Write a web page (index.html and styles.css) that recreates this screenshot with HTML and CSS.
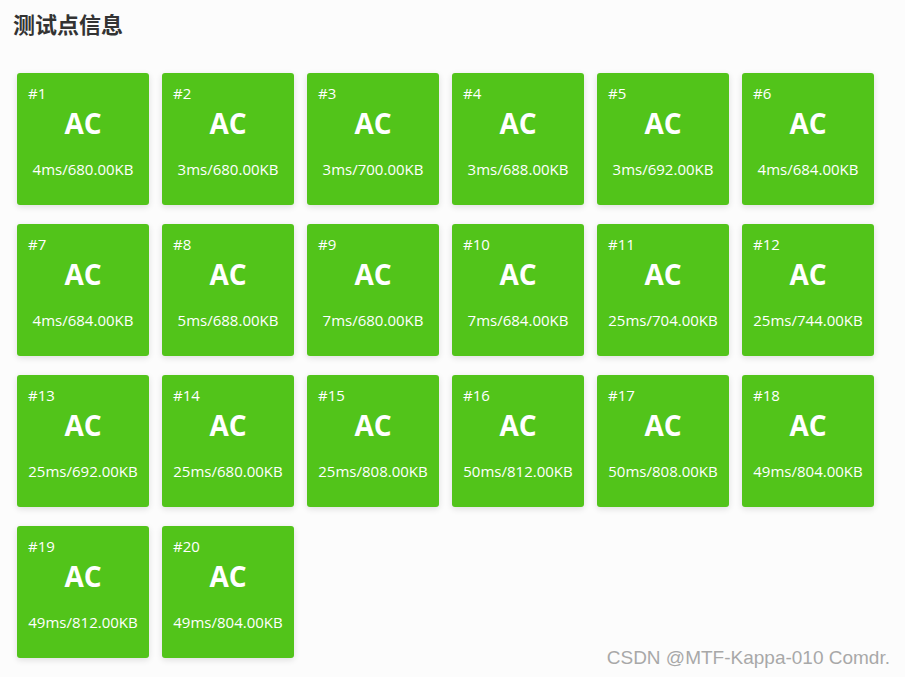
FILE: index.html
```html
<!DOCTYPE html>
<html lang="zh-CN">
<head>
    <meta charset="UTF-8">
    <meta name="viewport" content="width=device-width, initial-scale=1.0">
    <title>测试点信息</title>
    <link rel="stylesheet" href="styles.css">
</head>
<body>
    <div class="panel">
        <h3 class="panel-title">测试点信息</h3>
        <div class="cases">
            <div class="case"><span class="case-id">#1</span><span class="case-status">AC</span><span class="case-info">4ms/680.00KB</span></div>
            <div class="case"><span class="case-id">#2</span><span class="case-status">AC</span><span class="case-info">3ms/680.00KB</span></div>
            <div class="case"><span class="case-id">#3</span><span class="case-status">AC</span><span class="case-info">3ms/700.00KB</span></div>
            <div class="case"><span class="case-id">#4</span><span class="case-status">AC</span><span class="case-info">3ms/688.00KB</span></div>
            <div class="case"><span class="case-id">#5</span><span class="case-status">AC</span><span class="case-info">3ms/692.00KB</span></div>
            <div class="case"><span class="case-id">#6</span><span class="case-status">AC</span><span class="case-info">4ms/684.00KB</span></div>
            <div class="case"><span class="case-id">#7</span><span class="case-status">AC</span><span class="case-info">4ms/684.00KB</span></div>
            <div class="case"><span class="case-id">#8</span><span class="case-status">AC</span><span class="case-info">5ms/688.00KB</span></div>
            <div class="case"><span class="case-id">#9</span><span class="case-status">AC</span><span class="case-info">7ms/680.00KB</span></div>
            <div class="case"><span class="case-id">#10</span><span class="case-status">AC</span><span class="case-info">7ms/684.00KB</span></div>
            <div class="case"><span class="case-id">#11</span><span class="case-status">AC</span><span class="case-info">25ms/704.00KB</span></div>
            <div class="case"><span class="case-id">#12</span><span class="case-status">AC</span><span class="case-info">25ms/744.00KB</span></div>
            <div class="case"><span class="case-id">#13</span><span class="case-status">AC</span><span class="case-info">25ms/692.00KB</span></div>
            <div class="case"><span class="case-id">#14</span><span class="case-status">AC</span><span class="case-info">25ms/680.00KB</span></div>
            <div class="case"><span class="case-id">#15</span><span class="case-status">AC</span><span class="case-info">25ms/808.00KB</span></div>
            <div class="case"><span class="case-id">#16</span><span class="case-status">AC</span><span class="case-info">50ms/812.00KB</span></div>
            <div class="case"><span class="case-id">#17</span><span class="case-status">AC</span><span class="case-info">50ms/808.00KB</span></div>
            <div class="case"><span class="case-id">#18</span><span class="case-status">AC</span><span class="case-info">49ms/804.00KB</span></div>
            <div class="case"><span class="case-id">#19</span><span class="case-status">AC</span><span class="case-info">49ms/812.00KB</span></div>
            <div class="case"><span class="case-id">#20</span><span class="case-status">AC</span><span class="case-info">49ms/804.00KB</span></div>
        </div>
    </div>
    <div class="watermark">CSDN @MTF-Kappa-010 Comdr.</div>
</body>
</html>
```

FILE: styles.css
```css
body {
    margin: 0;
    background: #fcfcfc;
    font-family: "Open Sans", "Noto Sans CJK SC", sans-serif;
    height: 677px;
    overflow: hidden;
    position: relative;
}

.panel {
    padding: 8px 17px 0;
}

.panel-title {
    margin: 0 0 0 -4px;
    font-size: 22px;
    line-height: 30px;
    font-weight: bold;
    color: #333;
    font-family: "Noto Sans CJK SC", sans-serif;
}

.cases {
    margin-top: 35px;
    display: grid;
    grid-template-columns: repeat(6, 132px);
    column-gap: 13px;
    row-gap: 19px;
}

.case {
    height: 132px;
    background: #52c41a;
    border-radius: 3px;
    box-shadow: 0 2px 6px rgba(0, 0, 0, 0.12);
    color: #fff;
    display: flex;
    flex-direction: column;
    align-items: center;
    padding: 10px 11px 0;
    box-sizing: border-box;
}

.case-id {
    align-self: flex-start;
    font-size: 15px;
    font-weight: 500;
    line-height: 20px;
}

.case-status {
    font-size: 28px;
    font-weight: bold;
    line-height: 36px;
    margin-top: 2px;
}

.case-info {
    font-size: 15px;
    font-weight: 500;
    line-height: 20px;
    margin-top: 18px;
}

.watermark {
    position: absolute;
    right: 15px;
    bottom: 8px;
    font-family: "Liberation Sans", Arial, sans-serif;
    font-size: 19px;
    color: #a8a8a8;
    text-shadow: 0 0 1px #fff;
}
```
